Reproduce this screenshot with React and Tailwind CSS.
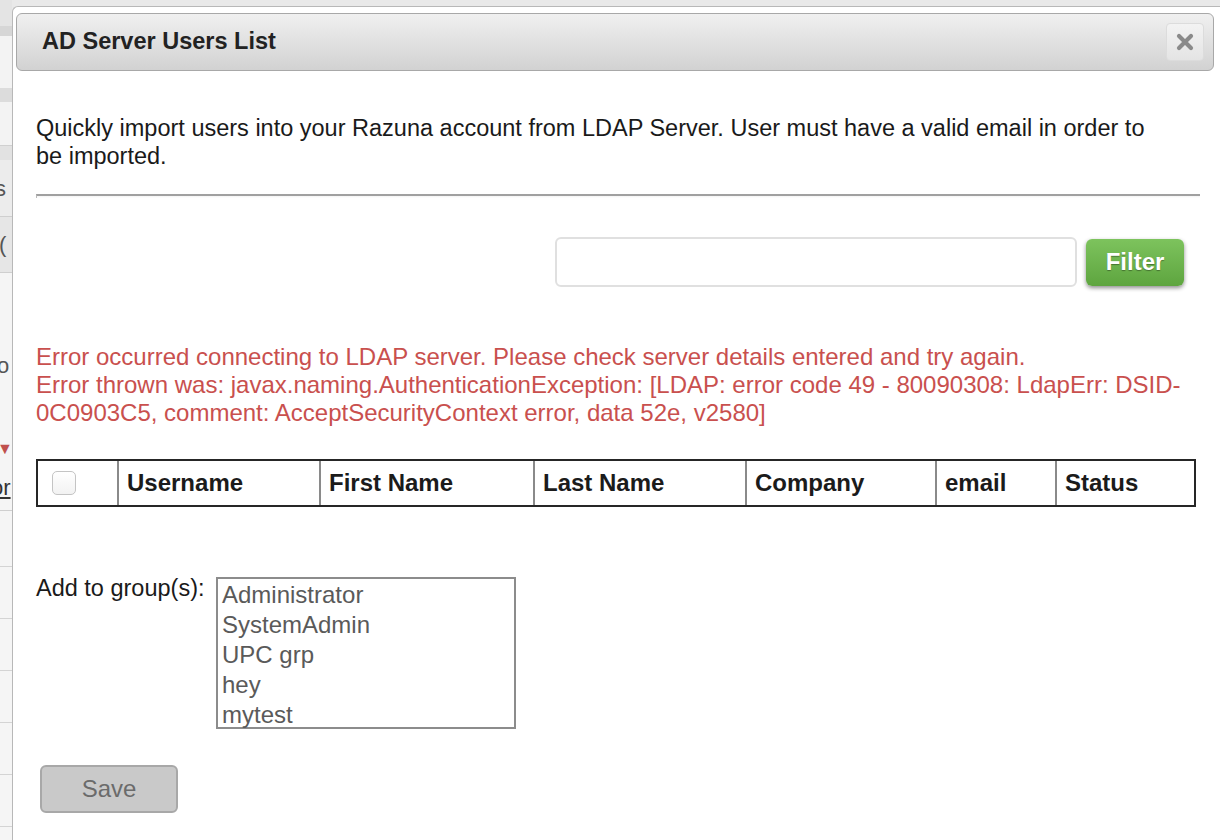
import { useState } from 'react';

const COLUMNS = [
  { label: 'Username', w: 'w-[202px]' },
  { label: 'First Name', w: 'w-[214px]' },
  { label: 'Last Name', w: 'w-[212px]' },
  { label: 'Company', w: 'w-[190px]' },
  { label: 'email', w: 'w-[120px]' },
  { label: 'Status', w: 'flex-1' },
];

const GROUPS = ['Administrator', 'SystemAdmin', 'UPC grp', 'hey', 'mytest'];

function BackdropStrip() {
  // bits of the page behind the dialog
  return (
    <div className="w-[12px] shrink-0 bg-[#f5f5f5] text-[22px] text-[#555] overflow-hidden">
      <div className="h-[26px] bg-[#e4e4e4]" />
      <div className="h-[10px] bg-[#d6d6d6]" />
      <div className="h-[52px] bg-[#f3f3f3]" />
      <div className="h-[14px] bg-[#dcdcdc]" />
      <div className="h-[44px] bg-[#f3f3f3] border-b border-[#d0d0d0]" />
      <div className="h-[14px] bg-[#e2e2e2]" />
      <div className="h-[57px] bg-[#ececec] border-b border-[#cfcfcf] flex items-center -ml-[5px]">s</div>
      <div className="h-[56px] bg-[#e6e6e6] border-b border-[#cfcfcf] flex items-center -ml-[1px]">(</div>
      <div className="h-[120px] flex items-end pb-[11px] -ml-[3px]">o</div>
      <div className="h-[34px]" />
      <div className="h-[44px] flex items-center">
        <span className="text-[#c0504d] text-[16px] -ml-[3px]">▼</span>
      </div>
      <div className="h-[40px] border-b border-[#cfcfcf] -ml-[9px] text-[#333] leading-[34px]">
        <span className="underline">or</span>
      </div>
      <div className="h-[56px] border-b border-[#d4d4d4]" />
      <div className="h-[52px] border-b border-[#d4d4d4]" />
      <div className="h-[52px] border-b border-[#d4d4d4]" />
      <div className="h-[52px] border-b border-[#d4d4d4]" />
      <div className="h-[52px] border-b border-[#d4d4d4]" />
      <div className="h-[52px] border-b border-[#d4d4d4]" />
      <div className="h-[52px] border-b border-[#d4d4d4]" />
    </div>
  );
}

export default function App() {
  const [filter, setFilter] = useState('');

  return (
    <div className="w-[1220px] h-[840px] flex bg-[#e9e9e9] overflow-hidden font-['Liberation_Sans',Arial,sans-serif]">
      <BackdropStrip />
      <div className="flex-1 mt-[6px] bg-white border-l border-t border-[#b8b8b8] rounded-tl-[6px] pl-[3px] pt-[6px] pr-[6px]">
        {/* title bar */}
        <div className="h-[58px] flex items-center justify-between rounded-[6px] border border-[#a8a8a8] bg-gradient-to-b from-[#f0f0f0] to-[#d2d2d2] pl-[25px] pr-[9px]">
          <h1 className="text-[23.5px] font-bold text-[#222]">AD Server Users List</h1>
          <button className="w-[38px] h-[38px] rounded-[4px] bg-gradient-to-b from-[#f3f3f3] to-[#e4e4e4] border border-[#dcdcdc] flex items-center justify-center">
            <svg width="18" height="18" viewBox="0 0 18 18">
              <path d="M3 3 L15 15 M15 3 L3 15" stroke="#8a8a8a" strokeWidth="4.2" strokeLinecap="round" />
            </svg>
          </button>
        </div>

        <div className="pl-[20px] pr-[8px]">
          <p className="mt-[43px] pr-[44px] text-[23.5px] leading-[28px] text-[#1a1a1a]">
            Quickly import users into your Razuna account from LDAP Server. User must have a valid email in order to be imported.
          </p>

          <div className="mt-[24px] mr-[6px] h-[4px] border-t-2 border-[#a0a0a0] border-l border-l-[#bbb] bg-gradient-to-b from-[#f4f4f4] to-white" />

          <div className="mt-[39px] flex justify-end items-center gap-[9px] pr-[22px]">
            <input
              value={filter}
              onChange={(e) => setFilter(e.target.value)}
              className="w-[522px] h-[50px] rounded-[6px] border-2 border-[#e0e0e0] px-3 text-[20px] outline-none"
            />
            <button className="w-[98px] h-[47px] rounded-[6px] bg-gradient-to-b from-[#7dc35d] to-[#5ea53f] text-white text-[24px] font-bold shadow-[0_2px_4px_rgba(0,0,0,0.45)] [text-shadow:0_1px_1px_rgba(0,0,0,0.35)]">
              Filter
            </button>
          </div>

          <div className="mt-[56px] pr-[6px] text-[24px] leading-[28px] text-[#c9504e]">
            <p>Error occurred connecting to LDAP server. Please check server details entered and try again.</p>
            <p>
              Error thrown was: javax.naming.AuthenticationException: [LDAP: error code 49 - 80090308: LdapErr: DSID-0C0903C5, comment: AcceptSecurityContext error, data 52e, v2580]
            </p>
          </div>

          <div className="mt-[32px] w-[1160px] h-[48px] flex border-2 border-[#262626] text-[24px] font-bold text-[#1b1b1b]">
            <div className="w-[81px] flex items-center pl-[14px] border-r-2 border-[#8a8a8a]">
              <span className="w-[24px] h-[24px] rounded-[5px] border border-[#c4c4c4] bg-gradient-to-b from-white to-[#f2f2f2]" />
            </div>
            {COLUMNS.map((c, i) => (
              <div
                key={c.label}
                className={`${c.w} flex items-center pl-[8px] ${i < COLUMNS.length - 1 ? 'border-r-2 border-[#8a8a8a]' : ''}`}
              >
                {c.label}
              </div>
            ))}
          </div>

          <div className="mt-[70px] flex items-start">
            <span className="w-[180px] text-[23.5px] text-[#1a1a1a] leading-[20px] pt-[1px]">Add to group(s):</span>
            <div className="w-[300px] h-[152px] border-2 border-[#8c8c8c] pl-[4px] pt-[1px] text-[24px] leading-[30px] text-[#5a5a5a]">
              {GROUPS.map((g) => (
                <div key={g}>{g}</div>
              ))}
            </div>
          </div>

          <button className="mt-[36px] ml-[4px] w-[138px] h-[48px] rounded-[6px] border-2 border-[#a8a8a8] bg-[#c9c9c9] text-[24px] text-[#6b6b6b]">
            Save
          </button>
        </div>
      </div>
    </div>
  );
}
